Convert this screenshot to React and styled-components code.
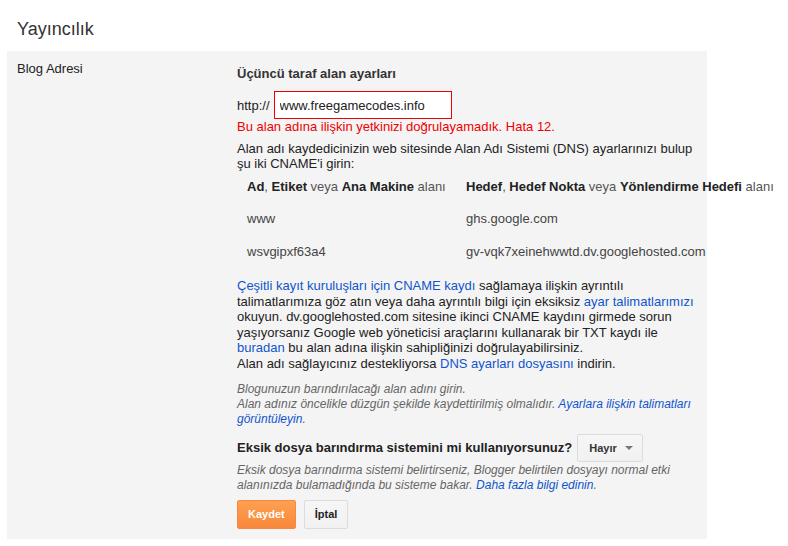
import React from "react";
import styled, { createGlobalStyle } from "styled-components";

const Global = createGlobalStyle`
  html, body { margin: 0; padding: 0; background: #fff; }
  body { font-family: "Liberation Sans", Arial, sans-serif; color: #222; font-size: 13px; }
`;

const Page = styled.div`
  width: 788px;
  height: 546px;
  overflow: hidden;
`;

const Header = styled.header`
  height: 51px;
  box-sizing: border-box;
  padding: 19px 0 0 17px;
`;

const Title = styled.h1`
  margin: 0;
  font-size: 18px;
  font-weight: normal;
  color: #333;
  line-height: 21px;
`;

const Panel = styled.section`
  margin-left: 7px;
  width: 700px;
  background: #f4f4f4;
  display: grid;
  grid-template-columns: 230px 470px;
  padding: 10px 0 10px;
`;

const Label = styled.div`
  padding-left: 10px;
  line-height: 15px;
  color: #222;
`;

const Content = styled.div`
  padding-top: 5px;
  width: 460px;
  line-height: 15px;
`;

const Heading = styled.div`
  font-weight: bold;
  color: #333;
`;

const UrlRow = styled.div`
  display: flex;
  align-items: center;
  margin-top: 10px;
`;

const Prefix = styled.span`
  margin-right: 4px;
  color: #222;
`;

const Input = styled.input`
  box-sizing: border-box;
  width: 178px;
  height: 28px;
  border: 1px solid #e00;
  padding: 0 5px;
  font: 13px "Liberation Sans", Arial, sans-serif;
  color: #222;
  background: #fff;
  outline: none;
`;

const Error = styled.div`
  color: #e00;
`;

const Text = styled.p`
  margin: ${(p) => p.$top || 0}px 0 0;
  color: #222;
  line-height: ${(p) => p.$lh || 15}px;
`;

const Table = styled.div`
  display: grid;
  grid-template-columns: 219px max-content;
`;

const Cell = styled.div`
  padding: ${(p) => (p.$head ? "8px" : "9px")} 10px;
  color: ${(p) => (p.$head ? "#555" : "#444")};
  white-space: nowrap;
`;

const B = styled.b`
  color: #222;
`;

const Link = styled.a`
  color: #15c;
  text-decoration: none;
  cursor: pointer;
`;

const Hint = styled.div`
  margin-top: ${(p) => p.$top || 0}px;
  font-size: 12px;
  font-style: italic;
  color: #666;
  line-height: 15px;
`;

const QuestionRow = styled.div`
  display: flex;
  align-items: center;
  margin-top: 7px;
`;

const Question = styled.span`
  font-weight: bold;
  color: #222;
  margin-right: 5px;
`;

const Dropdown = styled.button`
  box-sizing: border-box;
  height: 28px;
  padding: 0 9px 0 11px;
  display: inline-flex;
  align-items: center;
  gap: 8px;
  border: 1px solid #dcdcdc;
  border-radius: 2px;
  background: linear-gradient(#f6f6f6, #f1f1f1);
  font: bold 11px "Liberation Sans", Arial, sans-serif;
  color: #333;
`;

const Caret = styled.span`
  width: 0;
  height: 0;
  border-left: 4px solid transparent;
  border-right: 4px solid transparent;
  border-top: 4px solid #777;
`;

const Buttons = styled.div`
  display: flex;
  gap: 8px;
  margin-top: 7px;
`;

const Button = styled.button`
  box-sizing: border-box;
  height: 29px;
  padding: 0 10px;
  border-radius: 2px;
  font: bold 11px "Liberation Sans", Arial, sans-serif;
  border: 1px solid ${(p) => (p.$primary ? "#f8893c" : "#dcdcdc")};
  background: ${(p) =>
    p.$primary
      ? "linear-gradient(#fea052, #f8873a)"
      : "linear-gradient(#f6f6f6, #f1f1f1)"};
  color: ${(p) => (p.$primary ? "#fff" : "#222")};
`;

export default function App() {
  return (
    <Page>
      <Global />
      <Header>
        <Title>Yayıncılık</Title>
      </Header>
      <Panel>
        <Label>Blog Adresi</Label>
        <Content>
          <Heading>Üçüncü taraf alan ayarları</Heading>
          <UrlRow>
            <Prefix>http://</Prefix>
            <Input defaultValue="www.freegamecodes.info" />
          </UrlRow>
          <Error>Bu alan adına ilişkin yetkinizi doğrulayamadık. Hata 12.</Error>
          <Text $top={7}>
            Alan adı kaydedicinizin web sitesinde Alan Adı Sistemi (DNS) ayarlarınızı bulup şu iki CNAME'i girin:
          </Text>
          <Table>
            <Cell $head>
              <B>Ad</B>, <B>Etiket</B> veya <B>Ana Makine</B> alanı
            </Cell>
            <Cell $head>
              <B>Hedef</B>, <B>Hedef Nokta</B> veya <B>Yönlendirme Hedefi</B> alanı
            </Cell>
            <Cell>www</Cell>
            <Cell>ghs.google.com</Cell>
            <Cell>wsvgipxf63a4</Cell>
            <Cell>gv-vqk7xeinehwwtd.dv.googlehosted.com</Cell>
          </Table>
          <Text $top={10} $lh={15.6}>
            <Link>Çeşitli kayıt kuruluşları için CNAME kaydı</Link> sağlamaya ilişkin ayrıntılı
            talimatlarımıza göz atın veya daha ayrıntılı bilgi için eksiksiz{" "}
            <Link>ayar talimatlarımızı</Link> okuyun. dv.googlehosted.com sitesine ikinci CNAME
            kaydını girmede sorun yaşıyorsanız Google web yöneticisi araçlarını kullanarak bir TXT
            kaydı ile <Link>buradan</Link> bu alan adına ilişkin sahipliğinizi doğrulayabilirsiniz.
            <br />
            Alan adı sağlayıcınız destekliyorsa <Link>DNS ayarları dosyasını</Link> indirin.
          </Text>
          <Hint $top={10}>
            Blogunuzun barındırılacağı alan adını girin.
            <br />
            Alan adınız öncelikle düzgün şekilde kaydettirilmiş olmalıdır.{" "}
            <Link>Ayarlara ilişkin talimatları görüntüleyin</Link>.
          </Hint>
          <QuestionRow>
            <Question>Eksik dosya barındırma sistemini mi kullanıyorsunuz?</Question>
            <Dropdown>
              Hayır
              <Caret />
            </Dropdown>
          </QuestionRow>
          <Hint $top={1}>
            Eksik dosya barındırma sistemi belirtirseniz, Blogger belirtilen dosyayı normal etki
            alanınızda bulamadığında bu sisteme bakar. <Link>Daha fazla bilgi edinin</Link>.
          </Hint>
          <Buttons>
            <Button $primary>Kaydet</Button>
            <Button>İptal</Button>
          </Buttons>
        </Content>
      </Panel>
    </Page>
  );
}
